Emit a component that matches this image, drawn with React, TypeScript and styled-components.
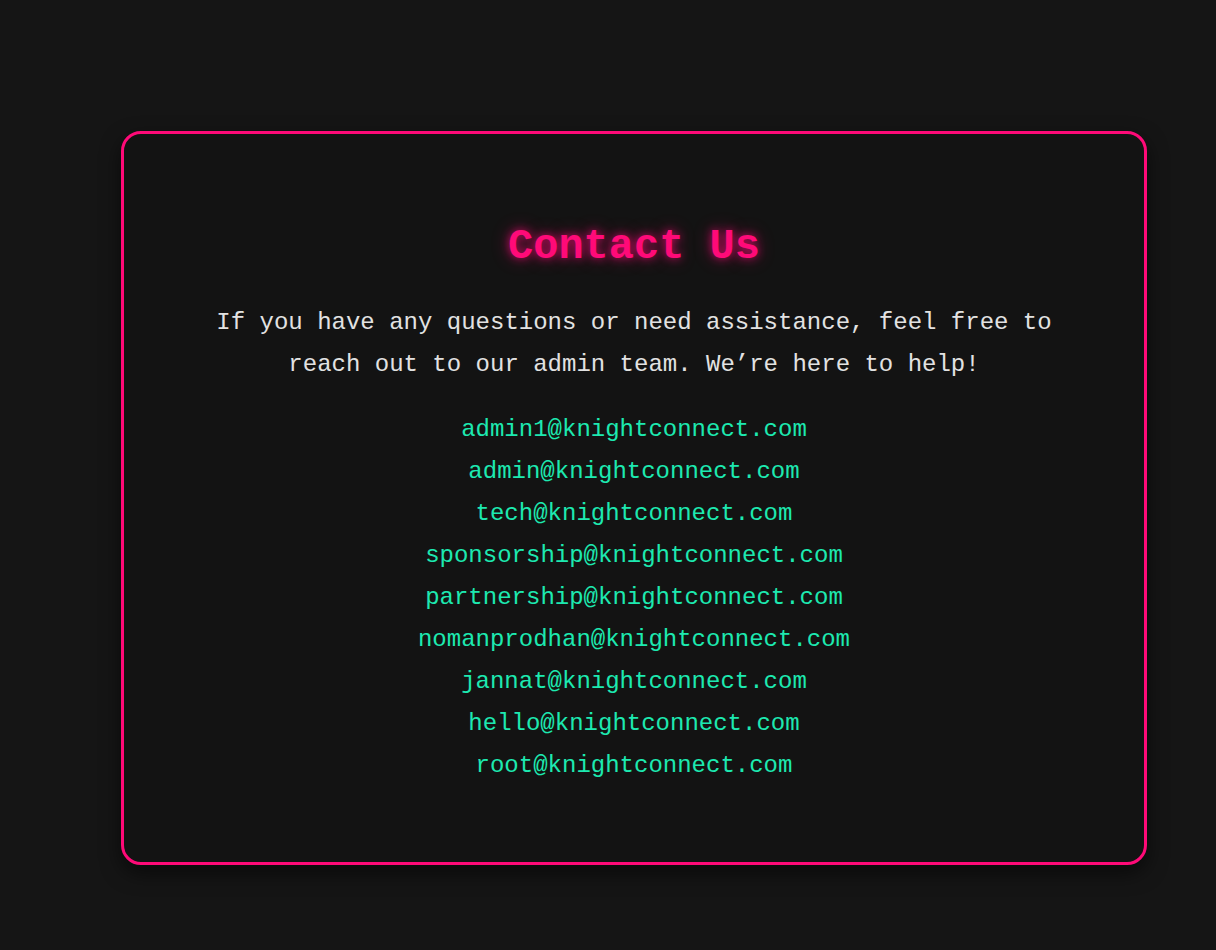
import React from "react";
import styled, { createGlobalStyle } from "styled-components";

const MONO = `"Courier New", "Nimbus Mono PS", "Nimbus Mono L", FreeMono, Courier, "Liberation Mono", monospace`;

const Global = createGlobalStyle`
  html, body { margin: 0; padding: 0; }
  body {
    background: #151515;
    font-family: ${MONO};
    min-height: 950px;
  }
`;

const Page = styled.main`
  box-sizing: border-box;
  min-height: 950px;
  padding: 131px 69px 85px 121px;
`;

const Card = styled.section`
  box-sizing: border-box;
  border: 3px solid #ff0a78;
  border-radius: 20px;
  background: #131313;
  box-shadow: 0 8px 20px rgba(0, 0, 0, 0.55);
  padding: 88px 40px 75px;
  display: flex;
  flex-direction: column;
  align-items: center;
  text-align: center;
`;

const Title = styled.h1`
  margin: 0;
  font-family: ${MONO};
  font-weight: 700;
  font-size: 42px;
  line-height: 50px;
  color: #ff0a78;
  text-shadow: 0 0 8px rgba(255, 10, 120, 0.7), 0 0 18px rgba(255, 10, 120, 0.45);
`;

const Lead = styled.p`
  margin: 30px 0 0;
  max-width: 860px;
  font-size: 24px;
  line-height: 42px;
  color: #e2e2e2;
`;

const List = styled.ul`
  list-style: none;
  margin: 23px 0 0;
  padding: 0;
`;

const Item = styled.li`
  font-size: 24px;
  line-height: 42px;
`;

const Mail = styled.a`
  color: #1de9b0;
  text-decoration: none;
`;

const emails = [
  "admin1@knightconnect.com",
  "admin@knightconnect.com",
  "tech@knightconnect.com",
  "sponsorship@knightconnect.com",
  "partnership@knightconnect.com",
  "nomanprodhan@knightconnect.com",
  "jannat@knightconnect.com",
  "hello@knightconnect.com",
  "root@knightconnect.com",
];

export default function App() {
  return (
    <>
      <Global />
      <Page>
        <Card>
          <Title>Contact Us</Title>
          <Lead>
            If you have any questions or need assistance, feel free to reach out to our admin team. We’re here to help!
          </Lead>
          <List>
            {emails.map((e) => (
              <Item key={e}>
                <Mail href={`mailto:${e}`}>{e}</Mail>
              </Item>
            ))}
          </List>
        </Card>
      </Page>
    </>
  );
}
